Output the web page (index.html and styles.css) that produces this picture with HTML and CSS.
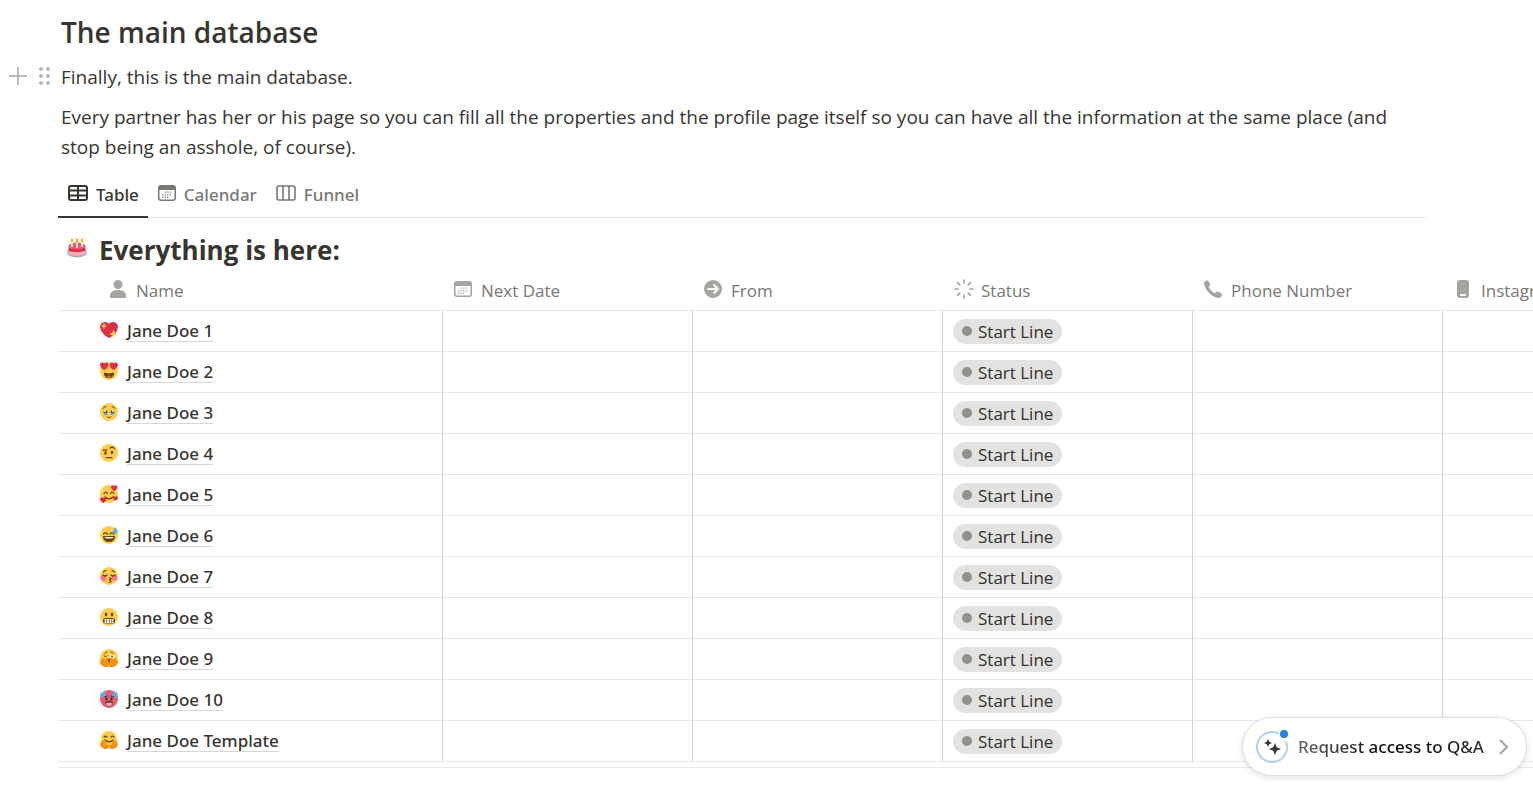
FILE: index.html
```html
<!DOCTYPE html>
<html lang="en">
<head>
  <meta charset="UTF-8" />
  <meta name="viewport" content="width=device-width, initial-scale=1.0" />
  <title>The main database</title>
  <link rel="stylesheet" href="styles.css">
</head>

<body>
  <!-- Shared icons -->
  <svg class="sprite" aria-hidden="true">
    <symbol id="calendar" viewBox="0 0 18 16">
      <path fill="currentColor" fill-rule="evenodd" d="M3 0h12a3 3 0 0 1 3 3v10a3 3 0 0 1-3 3H3a3 3 0 0 1-3-3V3a3 3 0 0 1 3-3zM1.500 5v8A1.500 1.500 0 0 0 3 14.500h12a1.500 1.500 0 0 0 1.500-1.500V5z"/>
      <path stroke="currentColor" stroke-width="1.200" stroke-dasharray="1.300 1.200" d="M6.700 7.200H14M4 9.900h10M4 12.400h7.500"/>
    </symbol>
    <symbol id="face" viewBox="0 0 36 36">
      <circle cx="18" cy="18" r="18" fill="#ffcc4d"/>
    </symbol>
    <symbol id="heart" viewBox="0 0 36 36">
      <path fill="#dd2e44" d="M35.900 11.800c0-5.400-4.400-9.800-9.900-9.800-3.300 0-6.200 1.600-8 4.100C16.200 3.600 13.300 2 10 2 4.500 2 .1 6.400.1 11.800c0 .8.100 1.500.3 2.300C1.800 22.600 11.200 31.600 18 34c6.800-2.400 16.200-11.400 17.600-19.900.2-.8.300-1.500.3-2.300z"/>
    </symbol>
    <symbol id="hands" viewBox="0 0 36 36">
      <path fill="#f4900c" d="M17 34c-1.500 3-8 3-12 0-3-2-5-6-5-9 0-2 2-2 3 0-2-5 0-7 2-4 0-3 3-4 4 0 1-2 3-1 3 2l1 4c4-1 5 3 4 7zM19 34c1.500 3 8 3 12 0 3-2 5-6 5-9 0-2-2-2-3 0 2-5 0-7-2-4 0-3-3-4-4 0-1-2-3-1-3 2l-1 4c-4-1-5 3-4 7z"/>
    </symbol>
    <symbol id="status-icon" viewBox="0 0 20 20">
      <g stroke="currentColor" stroke-width="1.700" stroke-linecap="round"><path d="M10 1v3M10 16v3M1 10h3M16 10h3M3.600 3.600l2.200 2.200M14.200 14.200l2.200 2.200M3.600 16.400l2.200-2.200M14.200 5.800l2.200-2.200"/></g>
    </symbol>
  </svg>

  <main class="page">
    <h2 class="heading">The main database</h2>

    <div class="block">
      <div class="block-tools">
        <button class="tool" aria-label="Add block"><svg width="18" height="18" viewBox="0 0 18 18"><path d="M9 0v18M0 9h18" stroke="currentColor" stroke-width="2"/></svg></button>
        <button class="tool" aria-label="Move block"><svg width="12" height="18" viewBox="0 0 12 18" fill="currentColor"><circle cx="2" cy="2" r="2"/><circle cx="9" cy="2" r="2"/><circle cx="2" cy="9" r="2"/><circle cx="9" cy="9" r="2"/><circle cx="2" cy="16" r="2"/><circle cx="9" cy="16" r="2"/></svg></button>
      </div>
      <p class="text">Finally, this is the main database.</p>
    </div>
    <p class="text">Every partner has her or his page so you can fill all the properties and the profile page itself so you can have all the information at the same place (and stop being an asshole, of course).</p>

    <nav class="tabs" role="tablist">
      <button class="tab active" role="tab" aria-selected="true">
        <svg width="20" height="16" viewBox="0 0 20 16" fill="none" stroke="currentColor" stroke-width="2"><rect x="1" y="1" width="18" height="14" rx="2"/><path d="M1 5.500h18M1 10.500h18M10 1v14"/></svg>
        Table
      </button>
      <button class="tab" role="tab" aria-selected="false">
        <svg width="18" height="16"><use href="#calendar"/></svg>
        Calendar
      </button>
      <button class="tab" role="tab" aria-selected="false">
        <svg width="20" height="16" viewBox="0 0 20 16" fill="none" stroke="currentColor" stroke-width="1.600"><rect x="1" y="1" width="18" height="14" rx="2"/><path d="M7 1v14M13 1v14"/></svg>
        Funnel
      </button>
    </nav>

    <h3 class="db-title">
      <svg width="20" height="20" viewBox="0 0 36 36">
        <ellipse cx="18" cy="26.500" rx="18" ry="8.500" fill="#8899a6"/>
        <ellipse cx="18" cy="25" rx="18" ry="8.500" fill="#ccd6dd"/>
        <path fill="#dd2e44" d="M3 19h30v7c0 8-30 8-30 0z"/>
        <path fill="#f4abba" d="M3 22c5 4 25 4 30 0v5c-2 7-28 7-30 0z"/>
        <ellipse cx="18" cy="15" rx="15" ry="7" fill="#ea596e"/>
        <path fill="#dd2e44" d="M3 15c1 8 29 8 30 0v7c-3 4-4-1-7 2s-5-1-8 1-4-3-8-1-5-1-7-2z"/>
        <path stroke="#fff8e8" stroke-width="3" d="M9 7v9M18 8v10M27 7v9"/>
        <path stroke="#ffac33" stroke-width="4" stroke-linecap="round" d="M9 3v3M18 3v4M27 3v3"/>
      </svg>
      Everything is here:
    </h3>

    <div class="table-wrap">
      <table class="db">
        <colgroup>
          <col class="col-name"><col><col><col><col><col>
        </colgroup>
        <thead>
          <tr>
            <th><span class="prop"><svg width="18" height="18" viewBox="0 0 18 18" fill="currentColor"><circle cx="9" cy="4.500" r="4.500"/><path d="M1 18v-2c0-4 3-6 8-6s8 2 8 6v2z"/></svg>Name</span></th>
            <th><span class="prop"><svg width="18" height="16"><use href="#calendar"/></svg>Next Date</span></th>
            <th><span class="prop"><svg width="18" height="18" viewBox="0 0 18 18"><circle cx="9" cy="9" r="9" fill="currentColor"/><path d="M3.500 9h10M9.500 4.500L14 9l-4.500 4.500" fill="none" stroke="#fff" stroke-width="2"/></svg>From</span></th>
            <th><span class="prop status-head"><svg width="20" height="20"><use href="#status-icon"/></svg>Status</span></th>
            <th><span class="prop"><svg width="18" height="18" viewBox="0 0 18 18"><path fill="currentColor" d="M0 3.200C0 1.500 2.200 0 3.300.2c.8.200 3 3.200 3 4.300 0 1-1.500 1.600-1.500 2.500 0 1.500 4.500 6 6 6 1 0 1.700-1.500 2.700-1.500 1.200 0 4.300 2 4.500 3 .2 1.200-1.500 3.500-3.200 3.500C8.500 18 0 9 0 3.200z"/></svg>Phone Number</span></th>
            <th><span class="prop"><svg width="18" height="18" viewBox="0 0 18 18"><rect x="3" width="12" height="18" rx="3" fill="currentColor"/><path d="M6 15h6" stroke="#fff" stroke-width="2"/></svg>Instagram</span></th>
          </tr>
        </thead>
        <tbody>
          <tr>
            <td><a class="name" href="#"><svg width="18" height="18" viewBox="0 0 36 36"><use href="#heart"/><path fill="#fdcb58" d="M8 3l2 5 5 2-5 2-2 5-2-5-5-2 5-2zM27 17l2.500 6.500L36 26l-6.500 2.500L27 35l-2.500-6.500L18 26l6.500-2.500z"/></svg><span>Jane Doe 1</span></a></td>
            <td></td><td></td><td><span class="status">Start Line</span></td><td></td><td></td>
          </tr>
          <tr>
            <td><a class="name" href="#"><svg width="18" height="18" viewBox="0 0 36 36"><use href="#face"/><use href="#heart" x="0" y="0" width="17" height="17"/><use href="#heart" x="19" y="0" width="17" height="17"/><path fill="#664500" d="M8 21c5 2 15 2 20 0 1 7-4 11-10 11S7 28 8 21z"/><path fill="#e8596e" d="M13 29c2-3 8-3 10 0-3 3-7 3-10 0z"/></svg><span>Jane Doe 2</span></a></td>
            <td></td><td></td><td><span class="status">Start Line</span></td><td></td><td></td>
          </tr>
          <tr>
            <td><a class="name" href="#"><svg width="18" height="18" viewBox="0 0 36 36"><use href="#face"/><path fill="none" stroke="#664500" stroke-width="2" stroke-linecap="round" d="M6 11q2-4 6-4M30 11q-2-4-6-4M14 28q4 3 8 0"/><circle cx="11" cy="18" r="4" fill="#65471b"/><circle cx="25" cy="18" r="4" fill="#65471b"/><path fill="#5dadec" d="M7 20h8c1 6-8 6-8 0zM21 20h8c0 6-9 6-8 0z"/><circle cx="10" cy="16" r="2" fill="#fff"/><circle cx="26" cy="16" r="2" fill="#fff"/></svg><span>Jane Doe 3</span></a></td>
            <td></td><td></td><td><span class="status">Start Line</span></td><td></td><td></td>
          </tr>
          <tr>
            <td><a class="name" href="#"><svg width="18" height="18" viewBox="0 0 36 36"><use href="#face"/><path fill="none" stroke="#664500" stroke-width="2.500" stroke-linecap="round" d="M6 12h8M20 8q5-4 9 1M12 27h12"/><ellipse cx="11" cy="18" rx="2.500" ry="3.500" fill="#664500"/><ellipse cx="24" cy="17" rx="2.500" ry="3.500" fill="#664500"/></svg><span>Jane Doe 4</span></a></td>
            <td></td><td></td><td><span class="status">Start Line</span></td><td></td><td></td>
          </tr>
          <tr>
            <td><a class="name" href="#"><svg width="18" height="18" viewBox="0 0 36 36"><use href="#face"/><path fill="none" stroke="#664500" stroke-width="2.500" stroke-linecap="round" d="M8 17q3-6 7 0M21 17q3-6 7 0M10 24q8 7 16 0"/><use href="#heart" x="22" y="0" width="13" height="13"/><use href="#heart" x="0" y="24" width="13" height="13"/><use href="#heart" x="26" y="22" width="10" height="10"/></svg><span>Jane Doe 5</span></a></td>
            <td></td><td></td><td><span class="status">Start Line</span></td><td></td><td></td>
          </tr>
          <tr>
            <td><a class="name" href="#"><svg width="18" height="18" viewBox="0 0 36 36"><use href="#face"/><path fill="none" stroke="#664500" stroke-width="2.500" stroke-linecap="round" d="M7 16q4-5 8 0M20 16q4-5 8 0"/><path fill="#664500" d="M6 20h24c0 8-5 12-12 12S6 28 6 20z"/><path fill="#fff" d="M9 22h18c0 4-18 4-18 0z"/><path fill="#5dadec" d="M30 2c3 4 6 7 5 10-2 5-9 4-9-1 0-3 3-5 4-9z"/></svg><span>Jane Doe 6</span></a></td>
            <td></td><td></td><td><span class="status">Start Line</span></td><td></td><td></td>
          </tr>
          <tr>
            <td><a class="name" href="#"><svg width="18" height="18" viewBox="0 0 36 36"><use href="#face"/><circle cx="7" cy="22" r="6" fill="#ff7892"/><circle cx="29" cy="22" r="6" fill="#ff7892"/><path fill="none" stroke="#664500" stroke-width="2.500" stroke-linecap="round" d="M6 16q4 4 8 0M22 16q4 4 8 0M7 10q2-3 5-3M29 10q-2-3-5-3M19 22q7 1 0 4 6 2 0 5"/></svg><span>Jane Doe 7</span></a></td>
            <td></td><td></td><td><span class="status">Start Line</span></td><td></td><td></td>
          </tr>
          <tr>
            <td><a class="name" href="#"><svg width="18" height="18" viewBox="0 0 36 36"><use href="#face"/><ellipse cx="12" cy="13" rx="2.500" ry="4" fill="#664500"/><ellipse cx="24" cy="13" rx="2.500" ry="4" fill="#664500"/><rect x="6" y="20" width="24" height="11" rx="5" fill="#664500"/><path stroke="#fff" stroke-width="3.500" stroke-dasharray="4 1" d="M9 23.500h18M9 28h18"/></svg><span>Jane Doe 8</span></a></td>
            <td></td><td></td><td><span class="status">Start Line</span></td><td></td><td></td>
          </tr>
          <tr>
            <td><a class="name" href="#"><svg width="18" height="18" viewBox="0 0 36 36"><use href="#face"/><path fill="none" stroke="#664500" stroke-width="2" stroke-linecap="round" d="M9 9q2-3 5-3M22 6q3 0 5 3M8 14q3 3 6 0"/><circle cx="24" cy="15" r="4" fill="#fff"/><circle cx="24" cy="15" r="2" fill="#664500"/><use href="#hands"/><path fill="#f4900c" d="M12 18h12l3 8-6 8h-8l-4-8z"/><ellipse cx="18" cy="23" rx="2" ry="3" fill="#664500"/></svg><span>Jane Doe 9</span></a></td>
            <td></td><td></td><td><span class="status">Start Line</span></td><td></td><td></td>
          </tr>
          <tr>
            <td><a class="name" href="#"><svg width="18" height="18" viewBox="0 0 36 36"><circle cx="18" cy="18" r="18" fill="#ea596e"/><path fill="#5dadec" d="M8 0c4 5 4 12 0 14-3 1-5 2-7-1C-1 9 2 8 2 3l3 3zM28 0c-4 5-4 12 0 14 3 1 5 4 7 1 2-4-1-7-1-12l-3 3z"/><path fill="none" stroke="#292f33" stroke-width="2" stroke-linecap="round" d="M9 14l5-2M22 12l5 2M11 25q7-5 14 0"/><ellipse cx="13" cy="18" rx="2" ry="3.500" fill="#292f33"/><ellipse cx="23" cy="18" rx="2" ry="3.500" fill="#292f33"/><path fill="#f4abba" stroke="#292f33" d="M12 25h12v4c0 5-12 5-12 0z"/></svg><span>Jane Doe 10</span></a></td>
            <td></td><td></td><td><span class="status">Start Line</span></td><td></td><td></td>
          </tr>
          <tr>
            <td><a class="name" href="#"><svg width="18" height="18" viewBox="0 0 36 36"><circle cx="18" cy="16" r="16" fill="#ffcc4d"/><path fill="none" stroke="#664500" stroke-width="2.500" stroke-linecap="round" d="M8 12q3-4 6 0M22 12q3-4 6 0M10 18q8 7 16 0"/><use href="#hands"/></svg><span>Jane Doe Template</span></a></td>
            <td></td><td></td><td><span class="status">Start Line</span></td><td></td><td></td>
          </tr>
        </tbody>
      </table>
    </div>
  </main>

  <button class="qa">
    <svg width="34" height="34" viewBox="0 0 34 34">
      <path fill="none" stroke="#afcff3" stroke-width="2" d="M23.500 3.500A15 15 0 1 0 31 11.500"/>
      <circle cx="29" cy="4" r="4" fill="#2383e2"/>
      <path fill="#37352f" d="M13 9l1.200 2.800L17 13l-2.800 1.200L13 17l-1.200-2.800L9 13l2.800-1.200zM20 13l1.700 4.300L26 19l-4.300 1.700L20 25l-1.700-4.300L14 19l4.300-1.700z"/>
    </svg>
    <span>Request access to Q&amp;A</span>
    <svg class="chevron" width="10" height="16" viewBox="0 0 10 16" fill="none" stroke="currentColor" stroke-width="2"><path d="M1 1l7 7-7 7"/></svg>
  </button>
</body>
</html>
```
FILE: styles.css
```css
* {
  box-sizing: border-box;
  margin: 0;
  padding: 0;
}

body {
  font-family: 'Segoe UI', 'Open Sans', 'Noto Sans', sans-serif;
  font-size: 17px;
  color: #37352f;
  background: #fff;
  overflow: hidden;
}

button {
  font: inherit;
  color: inherit;
  background: none;
  border: none;
  cursor: pointer;
}

svg {
  flex-shrink: 0;
}

.sprite {
  display: none;
}

.page {
  padding: 13px 0 0 58px;
}

.heading {
  padding: 0 3px;
  font-size: 28px;
  line-height: 38px;
  font-weight: 600;
}

.block {
  display: flex;
  align-items: center;
  margin: 11px 0 10px -49px;
}

.block-tools {
  display: flex;
  gap: 12px;
  width: 49px;
  padding-bottom: 2px;
  color: #b8b7b5;
}

.tool {
  display: flex;
}

.text {
  max-width: 1368px;
  padding: 0 3px;
  font-size: 19px;
  line-height: 30px;
}

/* View tabs */
.tabs {
  display: flex;
  margin: 10px 107px 0 0;
  height: 46px;
  border-bottom: 1px solid #e9e9e7;
}

.tab {
  display: flex;
  align-items: center;
  gap: 8px;
  padding: 0 9px 0 10px;
  margin-bottom: -1px;
  border-bottom: 2px solid transparent;
  color: #787774;
  font-family: 'Segoe UI', 'Noto Sans', sans-serif;
  font-weight: 500;
}

.tab svg {
  margin-bottom: 2px;
}

.tab.active {
  color: #37352f;
  border-bottom-color: #37352f;
}

.db-title {
  display: flex;
  align-items: center;
  gap: 12px;
  padding: 12px 9px 0;
  font-size: 26px;
  line-height: 40px;
  font-weight: 700;
}

.db-title svg {
  margin-bottom: 4px;
}

/* Database table */
.table-wrap {
  overflow: hidden;
  border-bottom: 1px solid #e9e9e7;
  padding-bottom: 5px;
}

.db {
  width: 1635px;
  table-layout: fixed;
  border-collapse: separate;
  border-spacing: 0;
}

.col-name {
  width: 385px;
}

.db th {
  height: 41px;
  padding: 0 11px;
  border-bottom: 1px solid #e9e9e7;
  color: #787774;
  font-weight: 400;
  text-align: left;
}

.db th:first-child {
  padding-left: 51px;
}

.prop {
  display: flex;
  align-items: center;
  gap: 9px;
}

.status-head {
  gap: 7px;
}

.prop svg {
  margin-bottom: 2px;
  color: #a5a4a0;
}

.db td {
  height: 41px;
  padding: 0 10px;
  border-right: 1px solid #c9d4e3;
  border-bottom: 1px solid #e9e9e7;
}

.db td:first-child {
  padding-left: 42px;
}

.name {
  display: flex;
  align-items: center;
  gap: 9px;
  color: #37352f;
  font-family: 'Segoe UI', 'Noto Sans', sans-serif;
  line-height: 20px;
  font-weight: 500;
  text-decoration: none;
}

.name svg {
  margin-bottom: 2px;
}

.name span {
  border-bottom: 1px solid #d7d6d4;
}

.status {
  display: inline-flex;
  align-items: center;
  gap: 6px;
  height: 25px;
  padding: 0 9px;
  border-radius: 13px;
  background: #e3e2e0;
  color: #32302c;
  vertical-align: middle;
}

.status::before {
  content: '';
  width: 10px;
  height: 10px;
  border-radius: 50%;
  background: #91918e;
}

/* Floating button */
.qa {
  position: fixed;
  right: 6px;
  bottom: 16px;
  display: flex;
  align-items: center;
  gap: 9px;
  height: 59px;
  padding: 0 17px 0 12px;
  border: 1px solid #dcdcdb;
  border-radius: 30px;
  background: #fff;
  box-shadow: 0 2px 6px rgba(15, 15, 15, 0.12);
  font-family: 'Segoe UI', 'Noto Sans', sans-serif;
  font-weight: 500;
}

.qa span {
  color: transparent;
  background: linear-gradient(90deg, #666 0%, #000 50%, #333 100%);
  background-clip: text;
  -webkit-background-clip: text;
}

.chevron {
  margin-left: 6px;
  color: #a5a4a0;
}
```
